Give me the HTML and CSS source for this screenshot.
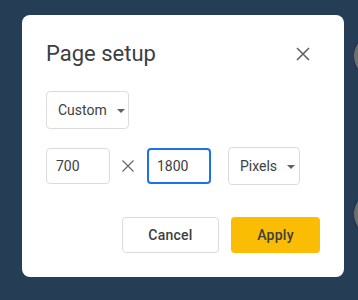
FILE: index.html
```html
<!DOCTYPE html>
<html lang="en">

<head>
  <meta charset="UTF-8" />
  <meta name="viewport" content="width=device-width, initial-scale=1.0" />
  <title>Page setup</title>
  <link rel="stylesheet" href="styles.css">
</head>

<body>
  <div class="edge">
    <div class="side-dot dot-top"></div>
    <div class="side-dot dot-bottom"></div>
  </div>

  <div class="dialog">
    <div class="dialog-header">
      <h1>Page setup</h1>
      <button class="close-btn" aria-label="Close">
        <svg width="14" height="14" viewBox="0 0 14 14">
          <path d="M1 1 L13 13 M13 1 L1 13" stroke="#5f6368" stroke-width="1.6" fill="none" />
        </svg>
      </button>
    </div>

    <div class="select select-size">
      <span>Custom</span>
      <span class="caret"></span>
    </div>

    <div class="size-row">
      <div class="field">700</div>
      <svg class="times" width="12" height="12" viewBox="0 0 12 12">
        <path d="M0.5 0.5 L11.5 11.5 M11.5 0.5 L0.5 11.5" stroke="#5f6368" stroke-width="1.1" fill="none" />
      </svg>
      <div class="field field-focus">1800</div>
      <div class="select select-unit">
        <span>Pixels</span>
        <span class="caret"></span>
      </div>
    </div>

    <div class="actions">
      <button class="btn btn-cancel">Cancel</button>
      <button class="btn btn-apply">Apply</button>
    </div>
  </div>
</body>

</html>
```

FILE: styles.css
```css
* {
  margin: 0;
  padding: 0;
  box-sizing: border-box;
}

body {
  font-family: Roboto, "Liberation Sans", sans-serif;
  background: #253d55;
  width: 358px;
  height: 300px;
  overflow: hidden;
  position: relative;
}

/* grey circles peeking in at the right edge */
.edge {
  position: absolute;
  top: 0;
  right: 0;
  width: 4px;
  height: 300px;
  overflow: hidden;
}

.side-dot {
  position: absolute;
  left: 0;
  width: 44px;
  height: 44px;
  border-radius: 50%;
  background: #6e6e6e;
  box-shadow: 0 0 3px rgba(0, 0, 0, 0.4);
}

.dot-top {
  top: 34px;
}

.dot-bottom {
  top: 192px;
}

.dialog {
  position: relative;
  margin: 15px 0 0 22px;
  width: 322px;
  height: 262px;
  background: #fff;
  border-radius: 8px;
  padding: 25px 24px 24px 24px;
  display: flex;
  flex-direction: column;
}

.dialog-header {
  display: flex;
  justify-content: space-between;
  align-items: center;
  height: 28px;
}

.dialog-header h1 {
  font-size: 22px;
  font-weight: 400;
  line-height: 28px;
  color: #3c4043;
}

.close-btn {
  border: none;
  background: none;
  width: 14px;
  height: 14px;
  margin-right: 10px;
  display: flex;
}

.select {
  display: flex;
  align-items: center;
  border: 1px solid #dadce0;
  border-radius: 4px;
  font-size: 14px;
  color: #3c4043;
}

.select-size {
  margin-top: 23px;
  width: 83px;
  height: 38px;
  padding-left: 11px;
  gap: 10px;
}

.caret {
  width: 0;
  height: 0;
  margin-top: 1px;
  border-left: 4px solid transparent;
  border-right: 4px solid transparent;
  border-top: 4px solid #5f6368;
}

.size-row {
  margin-top: 18px;
  display: flex;
  align-items: center;
}

.field {
  width: 64px;
  height: 36px;
  border: 1px solid #dadce0;
  border-radius: 4px;
  padding-left: 9px;
  font-size: 14px;
  line-height: 34px;
  color: #3c4043;
}

.field-focus {
  border: 2px solid #1a73e8;
  padding-left: 8px;
  line-height: 32px;
}

.times {
  margin: 0 13px 0 12px;
}

.select-unit {
  margin-left: 17px;
  width: 72px;
  height: 38px;
  padding-left: 11px;
  gap: 10px;
}

.actions {
  margin-top: auto;
  display: flex;
  justify-content: flex-end;
  gap: 12px;
}

.btn {
  height: 36px;
  border-radius: 4px;
  font-family: Roboto, "Liberation Sans", sans-serif;
  font-size: 14px;
  font-weight: 500;
  letter-spacing: 0.25px;
  color: #3c4043;
}

.btn-cancel {
  width: 97px;
  background: #fff;
  border: 1px solid #dadce0;
}

.btn-apply {
  width: 89px;
  background: #fbbc04;
  border: none;
  color: #3c4043;
}
```
